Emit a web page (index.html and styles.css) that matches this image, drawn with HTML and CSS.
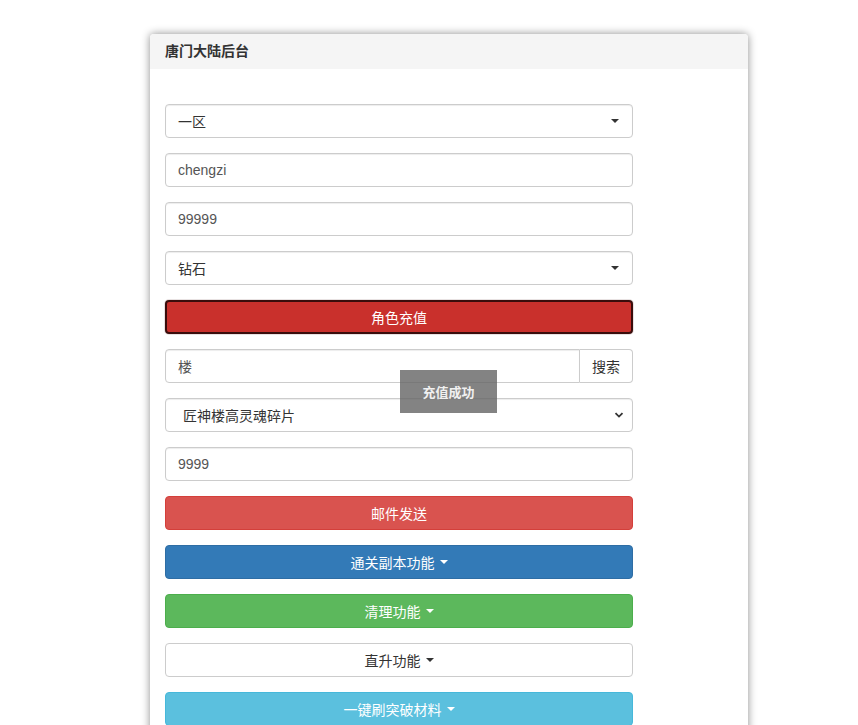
FILE: index.html
```html
<!DOCTYPE html>
<html lang="zh-CN">
<head>
    <meta charset="UTF-8">
    <meta name="viewport" content="width=device-width, initial-scale=1.0">
    <title>唐门大陆后台</title>
    <link rel="stylesheet" href="styles.css">
</head>
<body>
    <div class="panel">
        <div class="panel-heading">唐门大陆后台</div>
        <div class="panel-body">
            <div class="form">
                <div class="form-control picker">
                    <span>一区</span>
                    <span class="caret dark"></span>
                </div>
                <div class="form-control">chengzi</div>
                <div class="form-control">99999</div>
                <div class="form-control picker">
                    <span>钻石</span>
                    <span class="caret dark"></span>
                </div>
                <button class="btn btn-focus">角色充值</button>

                <div class="input-group">
                    <div class="form-control">楼</div>
                    <button class="btn-addon">搜索</button>
                </div>
                <div class="form-control native-select">
                    <span>匠神楼高灵魂碎片</span>
                    <svg width="10" height="8" viewBox="0 0 10 8">
                        <path d="M1.5 2.2 L5 5.6 L8.5 2.2" fill="none" stroke="#333" stroke-width="1.8"/>
                    </svg>
                </div>
                <div class="form-control">9999</div>
                <button class="btn btn-danger">邮件发送</button>
                <button class="btn btn-primary">通关副本功能 <span class="caret"></span></button>
                <button class="btn btn-success">清理功能 <span class="caret"></span></button>
                <button class="btn btn-default">直升功能 <span class="caret dark"></span></button>
                <button class="btn btn-info">一键刷突破材料 <span class="caret"></span></button>
            </div>
        </div>
        <div class="toast">充值成功</div>
    </div>
</body>
</html>
```

FILE: styles.css
```css
body {
    margin: 0;
    padding: 0;
    background: #fff;
    font-family: "Liberation Sans", "Noto Sans CJK SC", sans-serif;
    font-size: 14px;
    color: #333;
}

.panel {
    position: relative;
    width: 598px;
    margin: 34px 0 0 150px;
    background: #fff;
    border-radius: 4px 4px 0 0;
    box-shadow: 0 0 9px rgba(0, 0, 0, 0.45);
}

.panel-heading {
    height: 35px;
    line-height: 35px;
    padding: 0 15px;
    background: #f5f5f5;
    border-radius: 4px 4px 0 0;
    font-size: 14px;
    font-weight: bold;
    color: #333;
}

.panel-body {
    padding: 35px 15px 40px;
}

.form {
    width: 468px;
    display: flex;
    flex-direction: column;
    gap: 15px;
}

.form-control {
    box-sizing: border-box;
    height: 34px;
    padding: 0 12px;
    display: flex;
    align-items: center;
    border: 1px solid #ccc;
    border-radius: 4px;
    background: #fff;
    color: #555;
    box-shadow: inset 0 1px 1px rgba(0, 0, 0, 0.075);
}

.picker {
    justify-content: space-between;
    color: #333;
    padding-right: 13px;
}

.native-select {
    justify-content: space-between;
    padding-left: 17px;
    padding-right: 8px;
    color: #333;
}

.input-group {
    display: flex;
}

.input-group .form-control {
    flex: 1;
    border-radius: 4px 0 0 4px;
}

.btn-addon {
    box-sizing: border-box;
    width: 53px;
    height: 34px;
    border: 1px solid #ccc;
    border-left: none;
    border-radius: 0 4px 4px 0;
    background: #fff;
    color: #333;
    font-family: inherit;
    font-size: 14px;
    padding: 0;
}

.btn {
    box-sizing: border-box;
    height: 34px;
    width: 100%;
    border: 1px solid transparent;
    border-radius: 4px;
    font-family: inherit;
    font-size: 14px;
    color: #fff;
    display: flex;
    align-items: center;
    justify-content: center;
    gap: 5px;
    padding: 0;
}

.btn-focus {
    background: #c9302c;
    border: 2px solid #3a0d0c;
    box-shadow: 0 0 0 1px #e8e2e2;
}

.btn-danger {
    background: #d9534f;
    border-color: #d43f3a;
}

.btn-primary {
    background: #337ab7;
    border-color: #2e6da4;
}

.btn-success {
    background: #5cb85c;
    border-color: #4cae4c;
}

.btn-default {
    background: #fff;
    border-color: #ccc;
    color: #333;
}

.btn-info {
    background: #5bc0de;
    border-color: #46b8da;
}

.caret {
    display: inline-block;
    width: 0;
    height: 0;
    border-top: 4px solid #fff;
    border-left: 4px solid transparent;
    border-right: 4px solid transparent;
}

.caret.dark {
    border-top-color: #333;
}

.toast {
    position: absolute;
    left: 250px;
    top: 336px;
    width: 97px;
    height: 43px;
    display: flex;
    align-items: center;
    justify-content: center;
    background: rgba(100, 100, 100, 0.8);
    color: #f0f0f0;
    font-size: 13px;
    font-weight: bold;
}
```
